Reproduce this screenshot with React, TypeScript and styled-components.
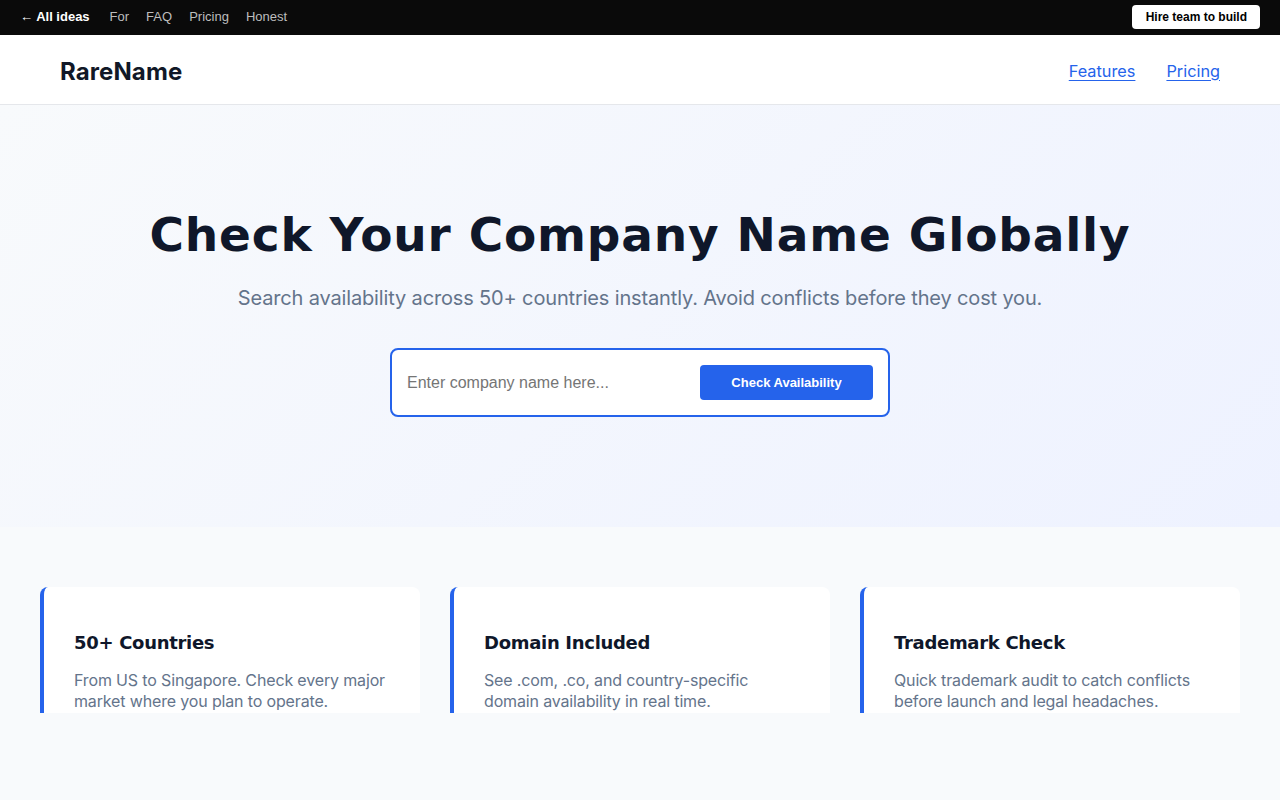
import React from "react";
import styled, { createGlobalStyle } from "styled-components";

const GlobalStyle = createGlobalStyle`
    * {
        box-sizing: border-box;
    }
    body {
        margin: 0;
        font-family: "Inter", "Liberation Sans", sans-serif;
        background: #f8fafc;
        color: #0f172a;
    }
`;

interface Feature {
    title: string;
    text: string;
}

const features: Feature[] = [
    {
        title: "50+ Countries",
        text: "From US to Singapore. Check every major market where you plan to operate.",
    },
    {
        title: "Domain Included",
        text: "See .com, .co, and country-specific domain availability in real time.",
    },
    {
        title: "Trademark Check",
        text: "Quick trademark audit to catch conflicts before launch and legal headaches.",
    },
];

function App(): React.ReactElement {
    return (
        <>
            <GlobalStyle />
            <TopBar>
                <TopLinks>
                    <BackLink href="#">← All ideas</BackLink>
                    <TopLink href="#">For</TopLink>
                    <TopLink href="#">FAQ</TopLink>
                    <TopLink href="#">Pricing</TopLink>
                    <TopLink href="#">Honest</TopLink>
                </TopLinks>
                <HireButton>Hire team to build</HireButton>
            </TopBar>
            <Header>
                <Logo>RareName</Logo>
                <Nav>
                    <NavLink href="#">Features</NavLink>
                    <NavLink href="#">Pricing</NavLink>
                </Nav>
            </Header>
            <Hero>
                <Title>Check Your Company Name Globally</Title>
                <Subtitle>
                    Search availability across 50+ countries instantly. Avoid conflicts before they cost you.
                </Subtitle>
                <SearchBox>
                    <SearchInput type="text" placeholder="Enter company name here..." />
                    <CheckButton>Check Availability</CheckButton>
                </SearchBox>
            </Hero>
            <Features>
                {features.map((f) => (
                    <Card key={f.title}>
                        <CardTitle>{f.title}</CardTitle>
                        <CardText>{f.text}</CardText>
                    </Card>
                ))}
            </Features>
        </>
    );
}

const TopBar = styled.div`
    height: 35px;
    background: #0a0a0a;
    display: flex;
    align-items: center;
    justify-content: space-between;
    padding: 0 20px 2px 20px;
    font-family: "Liberation Sans", Arial, sans-serif;
    font-size: 13px;
`;

const TopLinks = styled.div`
    display: flex;
    align-items: center;
    gap: 17px;
`;

const BackLink = styled.a`
    color: #ffffff;
    font-weight: 700;
    text-decoration: none;
    margin-right: 3px;
`;

const TopLink = styled.a`
    color: #bdbdbd;
    text-decoration: none;
`;

const HireButton = styled.button`
    background: #ffffff;
    color: #000000;
    border: none;
    border-radius: 4px;
    height: 24px;
    margin-top: 1px;
    padding: 0 13px 0 14px;
    font-family: "Liberation Sans", Arial, sans-serif;
    font-weight: 700;
    font-size: 12px;
`;

const Header = styled.header`
    height: 70px;
    background: #ffffff;
    border-bottom: 1px solid #e5e7eb;
    display: flex;
    align-items: center;
    justify-content: space-between;
    padding: 2px 60px 0;
`;

const Logo = styled.div`
    font-family: "Inter", sans-serif;
    font-weight: 700;
    font-size: 24px;
    color: #111827;
    letter-spacing: 0.1px;
    padding-top: 2px;
`;

const Nav = styled.nav`
    display: flex;
    gap: 31px;
`;

const NavLink = styled.a`
    color: #2563eb;
    font-size: 16.3px;
    text-decoration: underline;
    text-underline-offset: 3px;
`;

const Hero = styled.section`
    height: 422px;
    background: linear-gradient(135deg, #f8fafc 0%, #eef2ff 100%);
    display: flex;
    flex-direction: column;
    align-items: center;
    padding-top: 100px;
`;

const Title = styled.h1`
    margin: 0;
    font-family: "DejaVu Sans", sans-serif;
    font-weight: 700;
    font-size: 47px;
    letter-spacing: 0.8px;
    color: #0f172a;
    line-height: 60px;
`;

const Subtitle = styled.p`
    margin: 18px 0 0;
    font-size: 20px;
    letter-spacing: -0.15px;
    color: #64748b;
    line-height: 30px;
`;

const SearchBox = styled.div`
    margin-top: 35px;
    width: 500px;
    height: 69px;
    background: #ffffff;
    border: 2px solid #2563eb;
    border-radius: 8px;
    display: flex;
    align-items: center;
    padding: 0 15px 0 15px;
    gap: 12px;
`;

const SearchInput = styled.input`
    flex: 1;
    min-width: 0;
    border: none;
    outline: none;
    padding: 0;
    background: transparent;
    font-family: "Liberation Sans", Arial, sans-serif;
    font-size: 16px;
    color: #111827;

    &::placeholder {
        color: #757575;
    }
`;

const CheckButton = styled.button`
    width: 173px;
    height: 35px;
    background: #2563eb;
    color: #ffffff;
    border: none;
    border-radius: 4px;
    font-family: "Liberation Sans", Arial, sans-serif;
    font-weight: 700;
    font-size: 13px;
`;

const Features = styled.section`
    background: #f8fafc;
    padding: 60px 40px 90px;
    display: grid;
    grid-template-columns: repeat(3, 1fr);
    gap: 30px;
`;

const Card = styled.div`
    height: 126px;
    overflow: hidden;
    background: #ffffff;
    border-left: 4px solid #2563eb;
    border-radius: 8px 8px 0 0;
    padding: 44px 30px 0;
`;

const CardTitle = styled.h3`
    margin: 0;
    font-family: "DejaVu Sans", sans-serif;
    font-weight: 700;
    font-size: 18px;
    letter-spacing: -0.3px;
    color: #0f172a;
    line-height: 24px;
`;

const CardText = styled.p`
    margin: 15px 0 0;
    font-size: 16px;
    letter-spacing: -0.15px;
    line-height: 21px;
    color: #64748b;
`;

export default App;
